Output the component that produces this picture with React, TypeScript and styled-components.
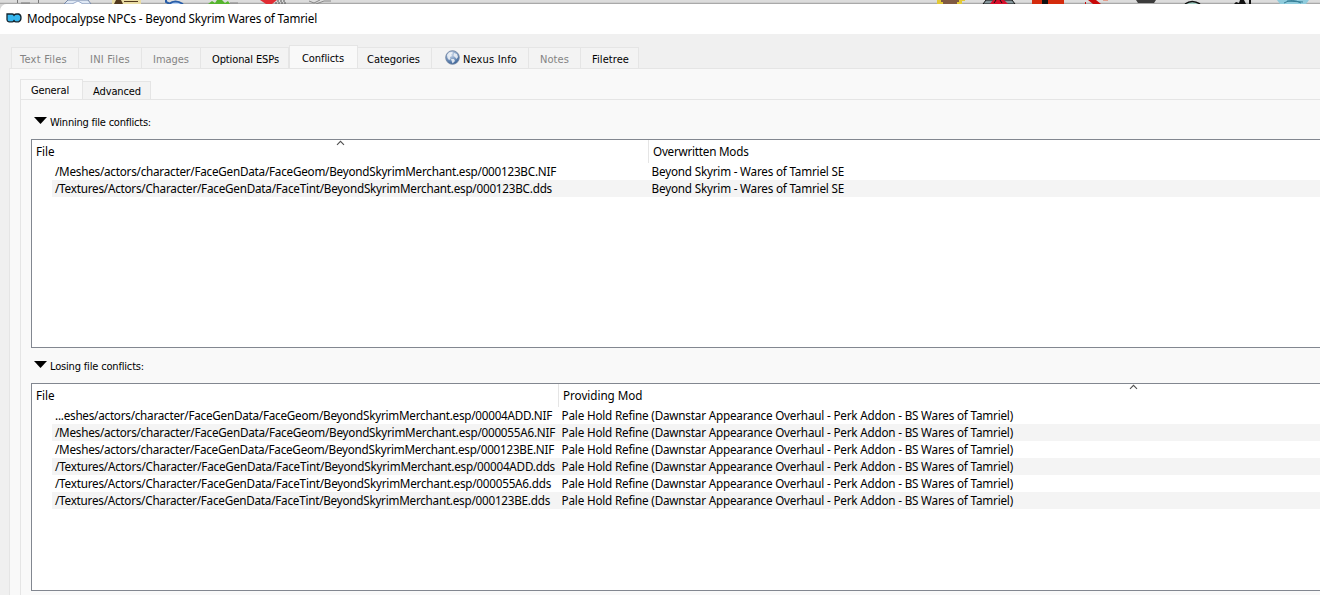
import React, { useLayoutEffect, useRef, useState } from "react";
import styled, { createGlobalStyle } from "styled-components";

const Global = createGlobalStyle`
  * { box-sizing: border-box; }
  body { margin: 0; overflow: hidden; background: #f0f0f0; color: #000; }
`;

const uiFont = `"Noto Sans", "Open Sans", sans-serif`;
const tabFont = `"DejaVu Sans", sans-serif`;

const Screen = styled.div`
  width: 1320px;
  height: 595px;
  overflow: hidden;
  display: flex;
  flex-direction: column;
  background: #d6d6d6;
`;

const Toolbar = styled.div`
  height: 4px;
  flex: none;
  overflow: hidden;
  background: linear-gradient(#dcdcdc 0 2px, #cfcfcf 2px 3px, #a9a9a9 3px);
`;

const Strip = styled.svg`
  display: block;
`;

const Dialog = styled.div`
  flex: 1;
  display: flex;
  flex-direction: column;
  background: #f0f0f0;
  border-top-left-radius: 7px;
  overflow: hidden;
`;

const TitleBar = styled.header`
  height: 30px;
  flex: none;
  padding: 0 0 2px 6px;
  display: flex;
  align-items: center;
  gap: 5px;
  background: #fff;
`;

const Label = styled.span<{ $font: string; $size: number }>`
  display: block;
  white-space: pre;
  font-family: ${(p) => p.$font};
  font-size: ${(p) => p.$size}px;
  font-stretch: ${(p) => (p.$font === tabFont ? "condensed" : "normal")};
  line-height: 17px;
`;

const Body = styled.main`
  flex: 1;
  padding: 11px 0 0 9px;
  display: flex;
  flex-direction: column;
`;

const TabRow = styled.nav<{ $inset: number; $height: number }>`
  display: flex;
  align-items: flex-end;
  height: ${(p) => p.$height}px;
  padding-left: ${(p) => p.$inset}px;
  margin-bottom: -1px;
  flex: none;
`;

const Tab = styled.div<{ $w: number; $h: number; $active?: boolean; $off?: boolean; $first?: boolean; $pad: number; $top?: number }>`
  width: ${(p) => p.$w}px;
  height: ${(p) => p.$h}px;
  padding: ${(p) => p.$top ?? (p.$active ? 4 : 3)}px 0 0 ${(p) => p.$pad}px;
  display: flex;
  align-items: flex-start;
  gap: 3px;
  color: ${(p) => (p.$off ? "#838383" : "#000")};
  background: ${(p) => (p.$active ? "#f9f9f9" : "#f3f3f3")};
  border: 1px solid #e5e5e5;
  border-left-width: ${(p) => (p.$first || p.$active ? 1 : 0)}px;
  border-bottom-color: ${(p) => (p.$active ? "#f9f9f9" : "#e5e5e5")};
`;

const Pane = styled.section`
  flex: 1;
  background: #f9f9f9;
  border: solid #e5e5e5;
  border-width: 1px 0 0 1px;
  padding: 10px 0 0 10px;
  display: flex;
  flex-direction: column;
`;

const SubPane = styled(Pane)`
  padding: 14px 0 0 10px;
`;

const Heading = styled.div`
  display: flex;
  height: 25px;
  flex: none;
  padding-left: 3px;
  gap: 3px;
`;

const Arrow = styled.svg`
  margin-top: 3px;
  flex: none;
`;

const List = styled.div<{ $h: number; $gap: number }>`
  height: ${(p) => p.$h}px;
  margin-bottom: ${(p) => p.$gap}px;
  flex: none;
  background: #fff;
  border: solid #828790;
  border-width: 1px 0 1px 1px;
`;

const HeaderRow = styled.div<{ $split: number }>`
  display: grid;
  grid-template-columns: ${(p) => p.$split}px 1fr;
  height: 23px;
`;

const HeaderCell = styled.div<{ $rule?: boolean }>`
  position: relative;
  padding: 3px 0 0 4px;
  border-left: ${(p) => (p.$rule ? "1px solid #e5e5e5" : "0")};
`;

const Sort = styled.svg<{ $left: number }>`
  position: absolute;
  top: 0;
  left: ${(p) => p.$left}px;
`;

const Row = styled.div<{ $split: number; $alt: boolean }>`
  display: grid;
  grid-template-columns: ${(p) => p.$split - 20}px 1fr;
  height: 17px;
  margin-left: 20px;
  background: ${(p) => (p.$alt ? "#f4f4f4" : "#fff")};
`;

const Cell = styled.div<{ $pad: number }>`
  padding-left: ${(p) => p.$pad}px;
`;

const GlobeIcon = styled.svg`
  flex: none;
  margin-top: -1px;
`;

/* Text tracked out or in so that it fills a given width. */
function Text({ children, w, tab, size }: { children: string; w: number; tab?: boolean; size?: number }) {
  const ref = useRef<HTMLSpanElement>(null);
  const [spacing, setSpacing] = useState(0);
  useLayoutEffect(() => {
    const el = ref.current;
    if (!el) return;
    el.style.letterSpacing = "0px";
    const range = document.createRange();
    range.selectNodeContents(el);
    const next = (w - range.getBoundingClientRect().width) / children.length;
    el.style.letterSpacing = `${next}px`;
    setSpacing(next);
  }, [children, w]);
  return (
    <Label ref={ref} $font={tab ? tabFont : uiFont} $size={size ?? (tab ? 11 : 11.7)} style={{ letterSpacing: spacing }}>
      {children}
    </Label>
  );
}

const Globe = () => (
  <GlobeIcon width="15" height="15" viewBox="0 0 15 15">
    <defs>
      <radialGradient id="globe" cx="0.4" cy="0.25" r="0.8">
        <stop offset="0" stopColor="#cfdcec" />
        <stop offset="0.5" stopColor="#7f9cc2" />
        <stop offset="1" stopColor="#2c5890" />
      </radialGradient>
    </defs>
    <circle cx="7.5" cy="7.5" r="6.8" fill="url(#globe)" stroke="#7386a3" strokeWidth="0.9" />
    <path d="M2 5 L4 2.5 L7 2 L8 3 L6 4.5 L7 6 L5 7 L5.5 9 L4 10 L2.5 8Z M9 3 L12 4 L13 7 L11.5 9 L10 7 L8.5 6Z M6 9 L9 9 L10 11 L7.5 13.5Z" fill="#f2f5f8" opacity="0.85" />
  </GlobeIcon>
);

const Logo = () => (
  <svg width="16" height="12" viewBox="0 0 16 12">
    <path d="M1 2H6.2Q7.3 2 8 3Q9 2 11 2H12.5Q15 2.6 15 5.8Q15 9 12.5 9.8H10Q8.7 9.8 8 9Q7.3 9.8 6.2 9.8H3Q1 9.6 1 7.8Z" fill="#35b6ee" stroke="#14242e" strokeWidth="1.3" />
    <path d="M8 3V4.2M8 7.8V9" stroke="#14242e" />
  </svg>
);

const ToolbarIcons = () => (
  <Strip width="1320" height="4" viewBox="0 0 1320 4">
    <path d="M17.5 0V3M38.5 0V3M21 3H30" stroke="#777" fill="none" />
    <path d="M64 4L68 0H88L91 4Z" fill="#dfe8f4" stroke="#7688a8" />
    <path d="M72 4L78 1L83 4" fill="#fff" stroke="#9aaccc" />
    <path d="M112 0H141V4H112Z" fill="#e9dca4" />
    <path d="M114 4L116 0H121L123 4ZM124 1H138V2H124Z" fill="#51381c" />
    <path d="M166 0V2L170 4M169 4Q175 -1 183 4" fill="#b9d3f4" stroke="#285da8" strokeWidth="2" />
    <path d="M208 4L212 1L215 3L217 0H222L225 3L228 1L230 4Z" fill="#55b52e" />
    <path d="M230 3H238" stroke="#888" />
    <path d="M260 0H277L272 4H266Z" fill="#e02b32" />
    <path d="M277 1H286M275 3H286" stroke="#555" strokeDasharray="2 1" />
    <path d="M309 1L314 3L320 0M316 4L324 1L331 1" stroke="#888" fill="none" />
    <path d="M937 0H965V1H962V4H937Z" fill="#e3c936" />
    <path d="M941 0H959V2H957V4H943V2H941Z" fill="#805a42" />
    <path d="M983 4L986 0H1012L1015 4Z" fill="#87979c" stroke="#111" />
    <path d="M990 4L993 0H1004L1008 4Z" fill="#d70f2b" />
    <path d="M994 3L996 0M1000 0L1002 3" stroke="#111" fill="none" />
    <path d="M1032 0H1064V4H1032Z" fill="#d42b0d" />
    <path d="M1042 0H1048V4H1042Z" fill="#111" />
    <path d="M1088 0H1096L1101 4H1093ZM1085 2H1086V4H1085Z" fill="#c80808" />
    <path d="M1103 0H1108" stroke="#e76040" />
    <path d="M1136 0H1156L1154 3H1138Z" fill="#3c3c3c" />
    <path d="M1185 4Q1192 -1 1200 4" fill="#9ecac0" stroke="#111" strokeWidth="1.5" />
    <path d="M1234 4L1236 2L1239 3L1240 0H1244L1246 4ZM1249 0H1251V4H1249Z" fill="#111" />
    <path d="M1277 0H1309L1306 4H1280Z" fill="#8fcbdc" />
    <path d="M1284 3Q1292 -2 1301 3M1287 1L1303 2" fill="none" stroke="#367f98" />
  </Strip>
);

const Marker = ({ left }: { left: number }) => (
  <Sort $left={left} width="9" height="6" viewBox="0 0 9 6">
    <path d="M1 4.8L4.5 1.3L8 4.8" fill="none" stroke="#505050" strokeWidth="1.1" />
  </Sort>
);

const Section = ({ title, w }: { title: string; w: number }) => (
  <Heading>
    <Arrow width="13" height="8" viewBox="0 0 13 8">
      <path d="M0 0H13L6.5 7Z" />
    </Arrow>
    <Text tab w={w}>{title}</Text>
  </Heading>
);

type Entry = [string, number];

function FileList({ h, gap, split, other, otherW, sort, sortRight, rows, mod }: {
  h: number; gap: number; split: number; other: string; otherW: number; sort: number; sortRight?: boolean; rows: Entry[]; mod: Entry;
}) {
  return (
    <List $h={h} $gap={gap}>
      <HeaderRow $split={split}>
        <HeaderCell>
          <Text w={18.5}>File</Text>
          {!sortRight && <Marker left={sort} />}
        </HeaderCell>
        <HeaderCell $rule>
          <Text w={otherW}>{other}</Text>
          {sortRight && <Marker left={sort} />}
        </HeaderCell>
      </HeaderRow>
      {rows.map(([path, w], i) => (
        <Row key={path} $split={split} $alt={i % 2 === 1}>
          <Cell $pad={3}><Text w={w}>{path}</Text></Cell>
          <Cell $pad={3.6}><Text w={mod[1]}>{mod[0]}</Text></Cell>
        </Row>
      ))}
    </List>
  );
}

const winning: Entry[] = [
  ["/Meshes/actors/character/FaceGenData/FaceGeom/BeyondSkyrimMerchant.esp/000123BC.NIF", 501],
  ["/Textures/Actors/Character/FaceGenData/FaceTint/BeyondSkyrimMerchant.esp/000123BC.dds", 497],
];

const losing: Entry[] = [
  ["...eshes/actors/character/FaceGenData/FaceGeom/BeyondSkyrimMerchant.esp/00004ADD.NIF", 497],
  ["/Meshes/actors/character/FaceGenData/FaceGeom/BeyondSkyrimMerchant.esp/000055A6.NIF", 500],
  ["/Meshes/actors/character/FaceGenData/FaceGeom/BeyondSkyrimMerchant.esp/000123BE.NIF", 499],
  ["/Textures/Actors/Character/FaceGenData/FaceTint/BeyondSkyrimMerchant.esp/00004ADD.dds", 500],
  ["/Textures/Actors/Character/FaceGenData/FaceTint/BeyondSkyrimMerchant.esp/000055A6.dds", 496],
  ["/Textures/Actors/Character/FaceGenData/FaceTint/BeyondSkyrimMerchant.esp/000123BE.dds", 495],
];

export default function App() {
  return (
    <>
      <Global />
      <Screen>
        <Toolbar><ToolbarIcons /></Toolbar>
        <Dialog>
          <TitleBar>
            <Logo />
            <Text w={290}>Modpocalypse NPCs - Beyond Skyrim Wares of Tamriel</Text>
          </TitleBar>
          <Body>
            <TabRow $inset={2} $height={24}>
              <Tab $w={68} $h={22} $pad={8} $first $off><Text tab w={47}>Text Files</Text></Tab>
              <Tab $w={63} $h={22} $pad={11} $off><Text tab w={40}>INI Files</Text></Tab>
              <Tab $w={59} $h={22} $pad={11} $off><Text tab w={36}>Images</Text></Tab>
              <Tab $w={88} $h={22} $pad={11}><Text tab w={67}>Optional ESPs</Text></Tab>
              <Tab $w={69} $h={24} $pad={12} $active><Text tab w={42}>Conflicts</Text></Tab>
              <Tab $w={74} $h={22} $pad={9}><Text tab w={53}>Categories</Text></Tab>
              <Tab $w={97} $h={22} $pad={13}><Globe /><Text tab w={54}>Nexus Info</Text></Tab>
              <Tab $w={52} $h={22} $pad={11} $off><Text tab w={29}>Notes</Text></Tab>
              <Tab $w={58} $h={22} $pad={11}><Text tab w={37}>Filetree</Text></Tab>
            </TabRow>
            <Pane>
              <TabRow $inset={0} $height={21}>
                <Tab $w={63} $h={21} $pad={10} $top={2} $active><Text tab w={38}>General</Text></Tab>
                <Tab $w={68} $h={19} $pad={10} $top={1}><Text tab w={48}>Advanced</Text></Tab>
              </TabRow>
              <SubPane>
                <Section title="Winning file conflicts:" w={101} />
                <FileList h={209} gap={10} split={616} other="Overwritten Mods" otherW={95.5} sort={304} rows={winning} mod={["Beyond Skyrim - Wares of Tamriel SE", 192.4]} />
                <Section title="Losing file conflicts:" w={94} />
                <FileList h={208} gap={0} split={526} other="Providing Mod" otherW={79.5} sort={570} sortRight rows={losing} mod={["Pale Hold Refine (Dawnstar Appearance Overhaul - Perk Addon - BS Wares of Tamriel)", 451.4]} />
              </SubPane>
            </Pane>
          </Body>
        </Dialog>
      </Screen>
    </>
  );
}
